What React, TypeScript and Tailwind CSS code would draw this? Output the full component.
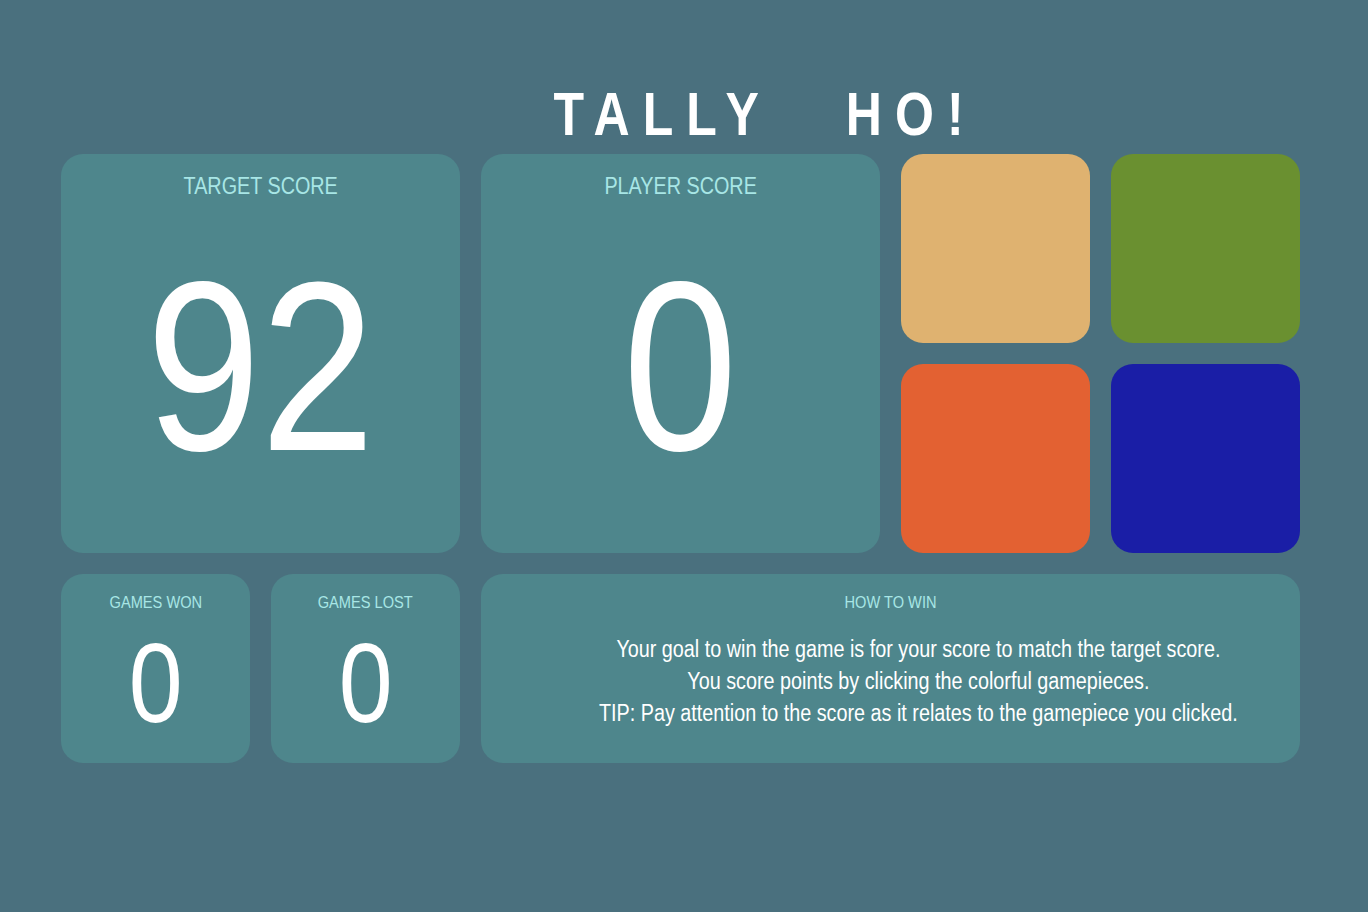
import React from "react";

// Arial Narrow isn't installed, so the condensed look comes from squeezing Liberation Sans
const sans = "font-['Liberation_Sans',Arial,sans-serif]";

function ScoreCard({ label, value }: { label: string; value: number }) {
  return (
    <div className="col-span-2 row-span-2 flex flex-col rounded-[22px] bg-[#4e868c]">
      <div className="pt-[18px] text-center text-[23px] leading-[28px] text-[#a8e6e6]">
        <span className="inline-block scale-x-[0.86]">{label}</span>
      </div>
      <div className="flex flex-1 items-center justify-center pb-[22px] text-[242px] leading-none text-white">
        <span className="inline-block scale-x-[0.85]">{value}</span>
      </div>
    </div>
  );
}

function SmallCard({ label, value }: { label: string; value: number }) {
  return (
    <div className="flex flex-col rounded-[22px] bg-[#4e868c]">
      <div className="pt-[18px] text-center text-[17px] leading-[22px] text-[#a8e6e6]">
        <span className="inline-block scale-x-[0.86]">{label}</span>
      </div>
      <div className="flex flex-1 items-center justify-center pb-[12px] text-[114px] leading-none text-white">
        <span className="inline-block scale-x-[0.85]">{value}</span>
      </div>
    </div>
  );
}

export default function App() {
  const pieces = ["bg-[#dfb270]", "bg-[#6a9030]", "bg-[#e36132]", "bg-[#1a1ea6]"];

  return (
    <div className={`h-[912px] w-full bg-[#4a707e] ${sans}`}>
      <div className="ml-[163px] pt-[84px] text-center">
        <h1 className="inline-block scale-x-[0.82] text-[61px] font-bold leading-[60px] tracking-[16px] text-white">
          TALLY<span className="ml-[90px]">HO!</span>
        </h1>
      </div>

      <div className="ml-[61px] mt-[10px] grid grid-cols-[repeat(6,189px)] grid-rows-[repeat(3,189px)] gap-[21px]">
        <ScoreCard label="TARGET SCORE" value={92} />
        <ScoreCard label="PLAYER SCORE" value={0} />
        {pieces.map((c) => (
          <button key={c} className={`rounded-[22px] ${c}`} />
        ))}

        <SmallCard label="GAMES WON" value={0} />
        <SmallCard label="GAMES LOST" value={0} />

        <div className="col-span-4 flex flex-col items-center rounded-[22px] bg-[#4e868c]">
          <div className="pt-[18px] text-[17px] leading-[22px] text-[#a8e6e6]">
            <span className="inline-block scale-x-[0.86]">HOW TO WIN</span>
          </div>
          <div className="ml-[56px] mt-[19px] scale-x-[0.86] text-center text-[23px] leading-[32px] text-white">
            <p>Your goal to win the game is for your score to match the target score.</p>
            <p>You score points by clicking the colorful gamepieces.</p>
            <p>TIP: Pay attention to the score as it relates to the gamepiece you clicked.</p>
          </div>
        </div>
      </div>
    </div>
  );
}
